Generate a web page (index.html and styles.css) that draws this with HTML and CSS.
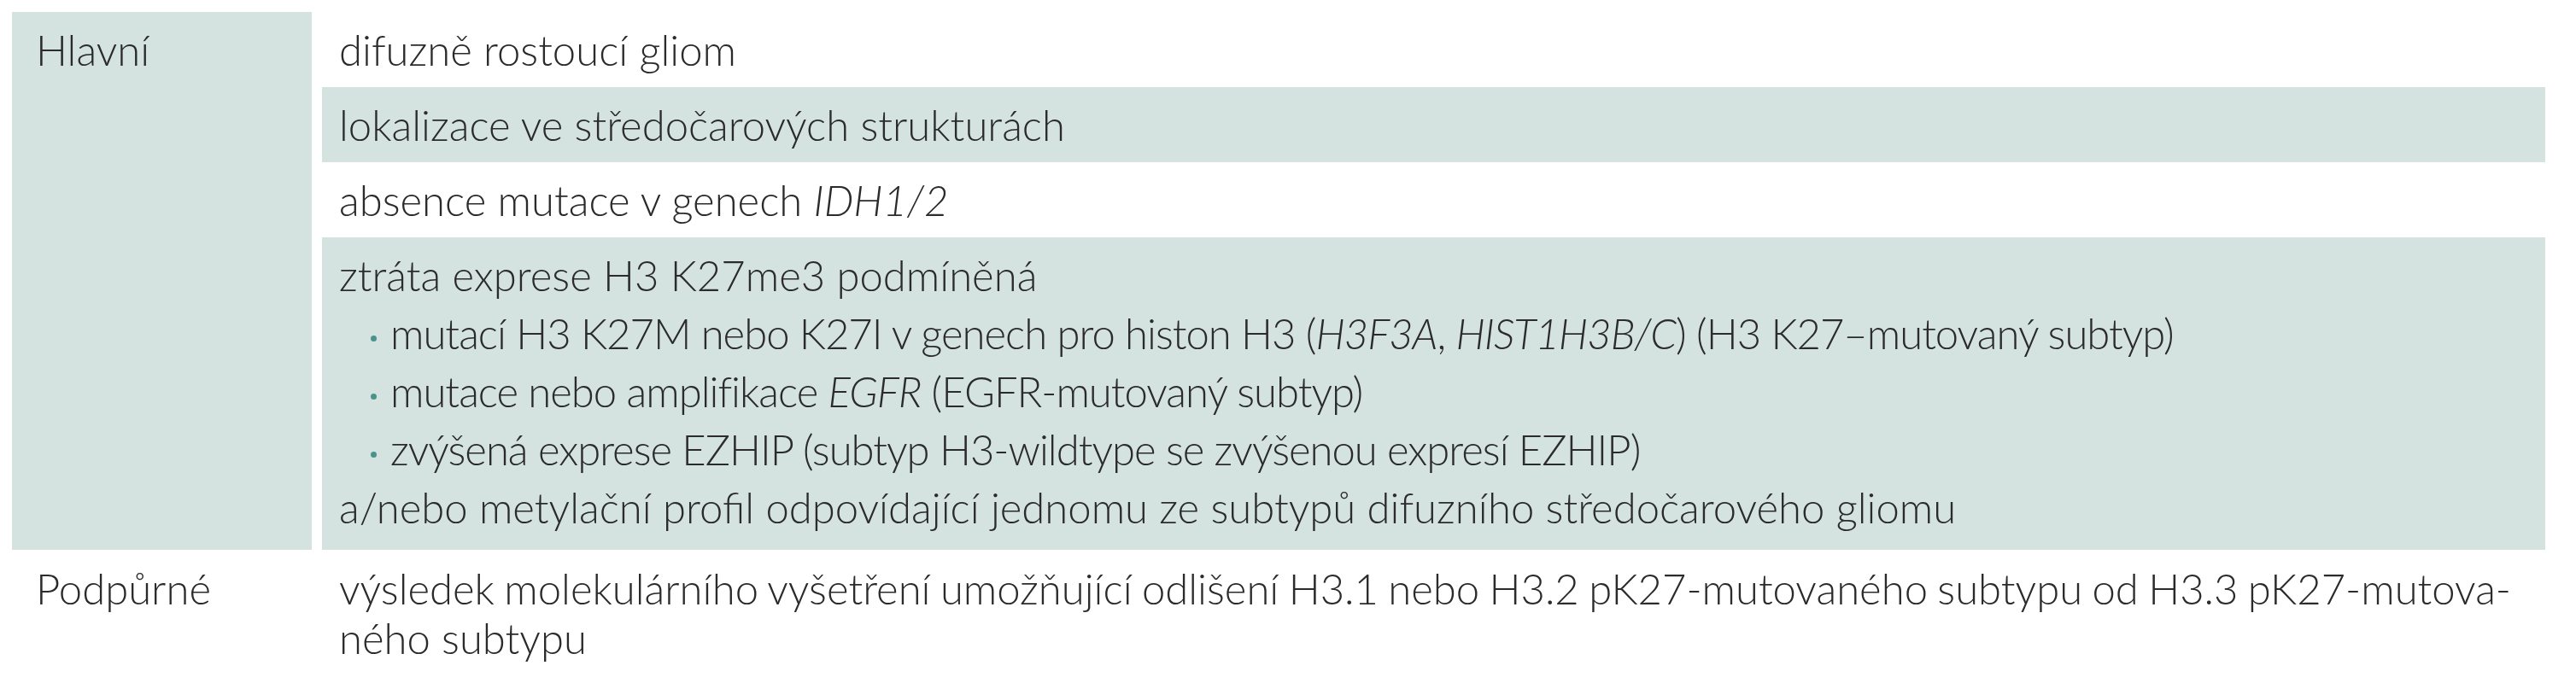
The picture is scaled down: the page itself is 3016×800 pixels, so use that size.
FILE: index.html
```html
<!DOCTYPE html>
<html lang="cs">
<head>
<meta charset="utf-8">
<title>Kritéria</title>
<link rel="stylesheet" href="styles.css">
</head>
<body>
<div class="criteria">
  <div class="label label-main">Hlavní</div>
  <div class="cell">difuzně rostoucí gliom</div>
  <div class="cell shade">lokalizace ve středočarových strukturách</div>
  <div class="cell">absence mutace v genech <i>IDH1/2</i></div>
  <div class="cell shade cell-multi">
    <p class="line">ztráta exprese H3 K27me3 podmíněná</p>
    <ul class="bullets">
      <li>mutací H3 K27M nebo K27I v genech pro histon H3 (<i>H3F3A</i>, <i>HIST1H3B/C</i>) (H3 K27–mutovaný subtyp)</li>
      <li>mutace nebo amplifikace <i>EGFR</i> (EGFR-mutovaný subtyp)</li>
      <li>zvýšená exprese EZHIP (subtyp H3-wildtype se zvýšenou expresí EZHIP)</li>
    </ul>
    <p class="line">a/nebo metylační profil odpovídající jednomu ze subtypů difuzního středočarového gliomu</p>
  </div>
  <div class="label label-support">Podpůrné</div>
  <div class="cell cell-support">
    <span class="just">výsledek molekulárního vyšetření umožňující odlišení H3.1 nebo H3.2 pK27-mutovaného subtypu od H3.3 pK27-mutova-</span>
    <span class="rest">ného subtypu</span>
  </div>
</div>
</body>
</html>
```
FILE: styles.css
```css
html, body {
  margin: 0;
  padding: 0;
  background: #ffffff;
}

body {
  font-family: Lato, "Liberation Sans", sans-serif;
  font-weight: 300;
  font-size: 49px;
  line-height: 68px;
  color: #2b2b2b;
}

.criteria {
  display: grid;
  grid-template-columns: 351px 1fr;
  column-gap: 12px;
  width: 2966px;
  margin: 14px 0 0 14px;
}

.label {
  padding: 10px 0 10px 28px;
}

.label-main {
  grid-row: 1 / span 4;
  background: #d4e3df;
}

.cell {
  padding: 10px 40px 10px 20px;
}

.shade {
  background: #d4e3df;
}

.cell-multi {
  padding-bottom: 16px;
}

.line {
  margin: 0;
}

.bullets {
  list-style: none;
  margin: 0;
  padding: 0 0 0 37px;
}

.bullets li {
  display: block;
  letter-spacing: -1px;
}

.bullets li::before {
  content: "";
  display: inline-block;
  width: 7px;
  height: 7px;
  border-radius: 50%;
  background: #4a938c;
  margin-right: 16px;
  vertical-align: 9px;
}

.label-support,
.cell-support {
  line-height: 58px;
  padding-top: 16px;
}

.cell-support .just {
  display: block;
  white-space: nowrap;
  word-spacing: -7px;
  text-align: justify;
  text-align-last: justify;
}

.cell-support .rest {
  display: block;
}
```
